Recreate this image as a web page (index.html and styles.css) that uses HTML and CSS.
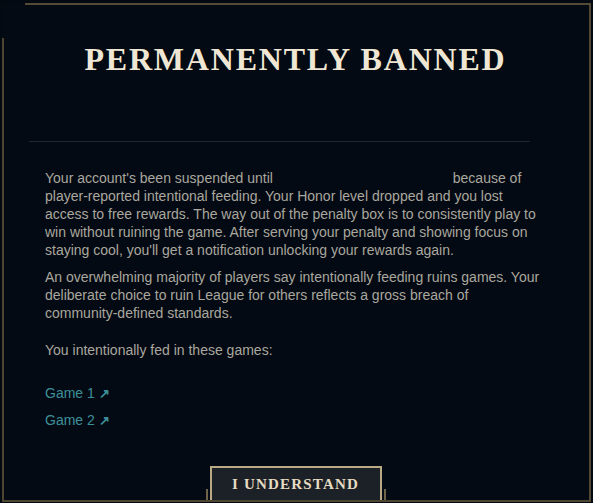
FILE: index.html
```html
<!DOCTYPE html>
<html>
<head>
<meta charset="utf-8">
<link rel="stylesheet" href="styles.css">
</head>
<body>
<div class="frame">
  <h1 class="title">PERMANENTLY BANNED</h1>
  <div class="divider"></div>
  <div class="body">
    <p>Your account's been suspended <span class="before-gap">until</span> because of player-reported intentional feeding. Your Honor level dropped and you lost access to free rewards. The way out of the penalty box is to consistently play to win without ruining the game. After serving your penalty and showing focus on staying cool, you'll get a notification unlocking your rewards again.</p>
    <p>An overwhelming majority of players say intentionally feeding ruins games. Your deliberate choice to ruin League for others reflects a gross breach of community-defined standards.</p>
    <p class="fed">You intentionally fed in these games:</p>
    <ul class="games">
      <li><a class="game-link">Game 1 <span class="arrow">&#8599;</span></a></li>
      <li><a class="game-link">Game 2 <span class="arrow">&#8599;</span></a></li>
    </ul>
  </div>
  <div class="actions">
    <span class="deco deco-left"></span>
    <button class="understand">I UNDERSTAND</button>
    <span class="deco deco-right"></span>
  </div>
</div>
</body>
</html>
```
FILE: styles.css
```css
html, body {
  margin: 0;
  padding: 0;
  background: #020911;
  width: 593px;
  height: 503px;
  overflow: hidden;
}
.frame {
  position: relative;
  box-sizing: border-box;
  margin: 3px 2px 0 2px;
  height: 499px;
  border-right: 2px solid #514935;
  border-bottom: 2px solid #4f4631;
  background: #030a13;
  display: flex;
  flex-direction: column;
}
.frame::before {
  content: "";
  position: absolute;
  top: 0;
  left: 23px;
  right: 0;
  height: 2px;
  background: #544b36;
}
.frame::after {
  content: "";
  position: absolute;
  top: 35px;
  left: 0;
  bottom: 0;
  width: 2px;
  background: #4c4431;
}
.title {
  margin: 36px 0 0 0;
  text-align: center;
  font-family: "Liberation Serif", serif;
  font-weight: bold;
  font-size: 32px;
  letter-spacing: 1.8px;
  color: #efe7d4;
  line-height: 40px;
}
.divider {
  margin: 62px 0 0 27px;
  width: 501px;
  height: 1px;
  background: #1f2731;
}
.body {
  width: 495px;
  padding: 0 0 0 43px;
  margin-top: 27px;
  font-family: "Liberation Sans", sans-serif;
  font-size: 14px;
  line-height: 18px;
  color: #aaa79e;
}
.body p {
  margin: 0 0 9px 0;
}
.before-gap {
  margin-right: 176px;
}
.fed {
  margin-top: 19px !important;
}
.games {
  list-style: none;
  margin: 25px 0 0 0;
  padding: 0;
}
.games li {
  height: 27px;
}
.game-link {
  color: #3d909a;
  text-decoration: none;
}
.arrow {
  font-size: 13px;
  font-weight: bold;
}
.actions {
  margin-top: auto;
  display: flex;
  justify-content: center;
  align-items: flex-end;
}
.understand {
  box-sizing: border-box;
  width: 172px;
  height: 34px;
  margin: 0 2px;
  border: 2px solid #b9a984;
  border-bottom: none;
  background: #1c2127;
  color: #e6dcc2;
  font-family: "Liberation Serif", serif;
  font-weight: bold;
  font-size: 15px;
  letter-spacing: 1.2px;
  padding: 0;
}
.deco {
  width: 2px;
  height: 11px;
  background: #6e6448;
}
```
